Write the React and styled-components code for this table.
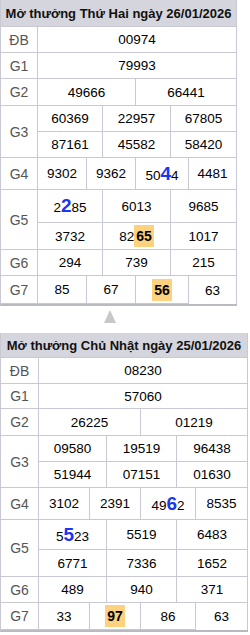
import React from "react";
import styled, { createGlobalStyle } from "styled-components";

const GlobalStyle = createGlobalStyle`
  html, body {
    margin: 0;
    padding: 0;
    background: #fff;
  }
  body {
    font-family: "Liberation Sans", Arial, sans-serif;
  }
`;

const LINE = "#c9c9d3";

const Page = styled.div`
  display: flex;
  flex-direction: column;
  align-items: flex-start;
`;

const Board = styled.div`
  display: grid;
  grid-template-columns: ${(p) => p.$cols};
  grid-template-rows: ${(p) => p.$rows};
  border-left: 1px solid ${LINE};
  border-bottom: 2px solid #b9b9c2;
`;

const Header = styled.div`
  grid-column: 1 / -1;
  background: #d5d5dd;
  border-right: 1px solid ${LINE};
  border-bottom: 1px solid ${LINE};
  color: #111;
  font-weight: bold;
  font-size: 13px;
  display: flex;
  align-items: center;
  justify-content: center;
  white-space: nowrap;
`;

const Cell = styled.div`
  grid-column: span ${(p) => p.$span || 1};
  border-right: 1px solid ${LINE};
  border-bottom: 1px solid ${LINE};
  display: flex;
  align-items: center;
  justify-content: center;
  font-size: 13.5px;
  color: #000;
  white-space: nowrap;
  &:last-child {
    border-bottom: none;
  }
`;

const Label = styled(Cell)`
  grid-column: 1;
  grid-row: span ${(p) => p.$rowSpan || 1};
  color: #555;
  font-size: 14px;
`;

const Big = styled.span`
  color: #1b35f5;
  font-weight: bold;
  font-size: 19px;
`;

const Hit = styled.span`
  background: #fdd27e;
  font-weight: bold;
  font-size: 14px;
  padding: 3px 2px;
`;

const Arrow = styled.div`
  margin: 4px 0 10px 104px;
  width: 0;
  height: 0;
  border-left: 6px solid transparent;
  border-right: 6px solid transparent;
  border-bottom: 13px solid #c8c8c8;
`;

// digits string: "{x}" marks the blue digit, "[xx]" marks the highlighted tail
const Num = ({ v }) => {
  const parts = v.split(/(\{.\}|\[.+\])/).filter(Boolean);
  return (
    <span>
      {parts.map((p, i) =>
        p[0] === "{" ? (
          <Big key={i}>{p[1]}</Big>
        ) : p[0] === "[" ? (
          <Hit key={i}>{p.slice(1, -1)}</Hit>
        ) : (
          <React.Fragment key={i}>{p}</React.Fragment>
        )
      )}
    </span>
  );
};

const spans = { 1: [6], 2: [3, 3], 3: [2, 2, 2], 4: [1, 2, 2, 1] };

const Result = ({ title, cols, rows, data }) => (
  <Board $cols={cols} $rows={rows}>
    <Header>{title}</Header>
    {data.map((g) =>
      g.lines.map((line, li) => (
        <React.Fragment key={g.name + li}>
          {li === 0 && <Label $rowSpan={g.lines.length}>{g.name}</Label>}
          {line.map((v, i) => (
            <Cell key={i} $span={spans[line.length][i]}>
              <Num v={v} />
            </Cell>
          ))}
        </React.Fragment>
      ))
    )}
  </Board>
);

const monday = [
  { name: "ĐB", lines: [["00974"]] },
  { name: "G1", lines: [["79993"]] },
  { name: "G2", lines: [["49666", "66441"]] },
  { name: "G3", lines: [["60369", "22957", "67805"], ["87161", "45582", "58420"]] },
  { name: "G4", lines: [["9302", "9362", "50{4}4", "4481"]] },
  { name: "G5", lines: [["2{2}85", "6013", "9685"], ["3732", "82[65]", "1017"]] },
  { name: "G6", lines: [["294", "739", "215"]] },
  { name: "G7", lines: [["85", "67", "[56]", "63"]] },
];

const sunday = [
  { name: "ĐB", lines: [["08230"]] },
  { name: "G1", lines: [["57060"]] },
  { name: "G2", lines: [["26225", "01219"]] },
  { name: "G3", lines: [["09580", "19519", "96438"], ["51944", "07151", "01630"]] },
  { name: "G4", lines: [["3102", "2391", "49{6}2", "8535"]] },
  { name: "G5", lines: [["5{5}23", "5519", "6483"], ["6771", "7336", "1652"]] },
  { name: "G6", lines: [["489", "940", "371"]] },
  { name: "G7", lines: [["33", "[97]", "86", "63"]] },
];

export default function App() {
  return (
    <Page>
      <GlobalStyle />
      <Result
        title="Mở thưởng Thứ Hai ngày 26/01/2026"
        cols="37px 49px 16px 33px 35px 18px 48px"
        rows="27px 26px 26px 27px 26px 26px 32px 33px 27px 26px 28px"
        data={monday}
      />
      <Arrow />
      <Result
        title="Mở thưởng Chủ Nhật ngày 25/01/2026"
        cols="38px 51px 17px 34px 36px 19px 52px"
        rows="25px 26px 25px 27px 26px 26px 32px 30px 27px 26px 27px"
        data={sunday}
      />
    </Page>
  );
}
